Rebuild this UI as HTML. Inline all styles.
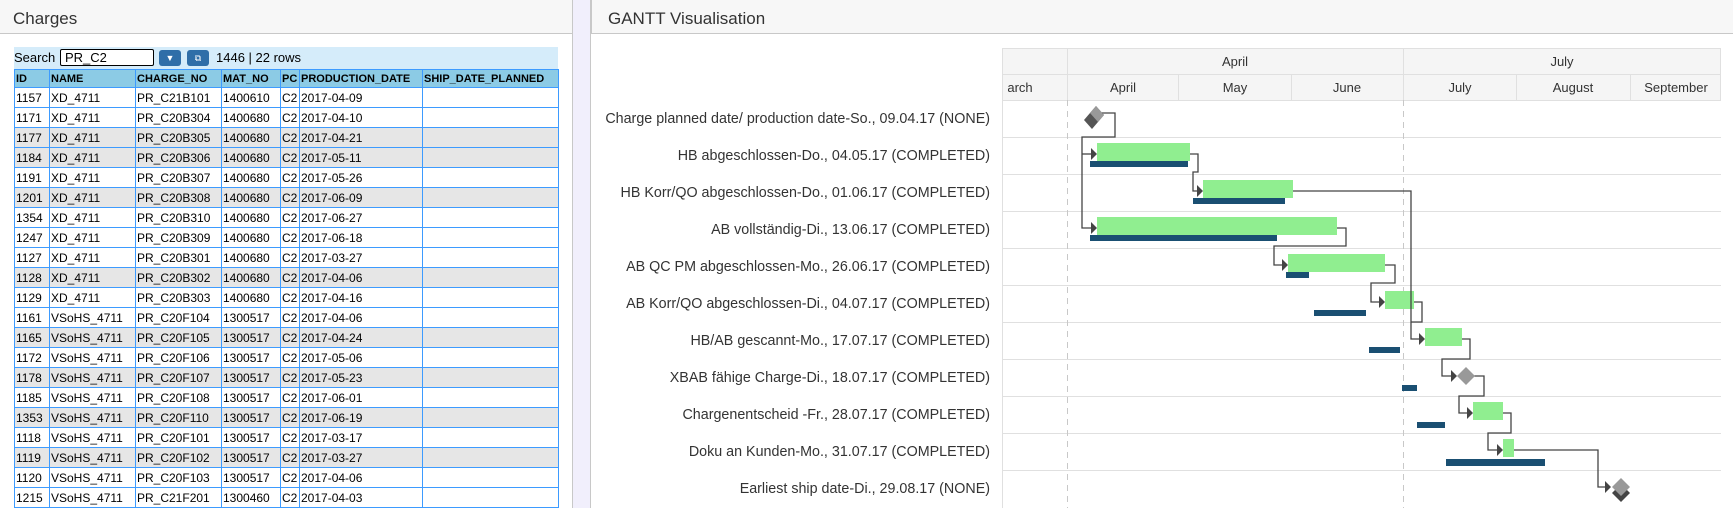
<!DOCTYPE html>
<html><head><meta charset="utf-8"><style>
*{margin:0;padding:0;box-sizing:border-box}
body{width:1733px;height:508px;overflow:hidden;background:#fff;font-family:"Liberation Sans",sans-serif;position:relative}
.ph{position:absolute;top:0;height:34px;background:#f7f7f7;border-bottom:1px solid #c8c8c8;font-size:17px;color:#333;padding:9px 0 0 0}
#lh{left:0;width:572px;padding-left:13px}
#rh{left:591px;width:1142px;padding-left:16px;border-left:1px solid #c8c8c8}
#split{position:absolute;left:572px;top:0;width:19px;height:508px;background:#f1effc;border-left:1px solid #c8c8c8;border-right:1px solid #c8c8c8}
#sb{position:absolute;left:14px;top:47px;width:544px;height:22px;background:#d5ecfa;font-size:13px;color:#000}
#sb span{position:absolute;top:3px}
#inp{position:absolute;left:46px;top:2px;width:94px;height:17px;border:1px solid #000;border-radius:2px;background:#fff;font-size:13px;padding-left:4px;line-height:15px}
.btn{position:absolute;top:3px;width:22px;height:16px;background:#2f6ea8;border-radius:3px;color:#fff;font-size:9px;text-align:center;line-height:16px}
table{position:absolute;left:14px;top:69px;border-collapse:collapse;table-layout:fixed;width:544px;font-size:12px}
td,th{border:1px solid #3d9bff;height:20px;padding:0 1px;text-align:left;white-space:nowrap;overflow:hidden}
th{background:#8ccbe5;font-size:11px;font-weight:bold;height:18px}
tr.g td{background:#e6e6e6}
</style></head><body>
<div class="ph" id="lh">Charges</div>
<div id="split"></div>
<div class="ph" id="rh">GANTT Visualisation</div>
<div id="sb"><span style="left:0">Search</span><div id="inp">PR_C2</div>
<div class="btn" style="left:145px">▼</div><div class="btn" style="left:173px">⧉</div>
<span style="left:202px">1446 | 22 rows</span></div>
<table>
<colgroup><col style="width:35px"><col style="width:86px"><col style="width:86px"><col style="width:59px"><col style="width:19px"><col style="width:123px"><col style="width:136px"></colgroup>
<tr><th>ID</th><th>NAME</th><th>CHARGE_NO</th><th>MAT_NO</th><th>PC</th><th>PRODUCTION_DATE</th><th>SHIP_DATE_PLANNED</th></tr>
<tr><td>1157</td><td>XD_4711</td><td>PR_C21B101</td><td>1400610</td><td>C2</td><td>2017-04-09</td><td></td></tr>
<tr><td>1171</td><td>XD_4711</td><td>PR_C20B304</td><td>1400680</td><td>C2</td><td>2017-04-10</td><td></td></tr>
<tr class="g"><td>1177</td><td>XD_4711</td><td>PR_C20B305</td><td>1400680</td><td>C2</td><td>2017-04-21</td><td></td></tr>
<tr class="g"><td>1184</td><td>XD_4711</td><td>PR_C20B306</td><td>1400680</td><td>C2</td><td>2017-05-11</td><td></td></tr>
<tr><td>1191</td><td>XD_4711</td><td>PR_C20B307</td><td>1400680</td><td>C2</td><td>2017-05-26</td><td></td></tr>
<tr class="g"><td>1201</td><td>XD_4711</td><td>PR_C20B308</td><td>1400680</td><td>C2</td><td>2017-06-09</td><td></td></tr>
<tr><td>1354</td><td>XD_4711</td><td>PR_C20B310</td><td>1400680</td><td>C2</td><td>2017-06-27</td><td></td></tr>
<tr><td>1247</td><td>XD_4711</td><td>PR_C20B309</td><td>1400680</td><td>C2</td><td>2017-06-18</td><td></td></tr>
<tr><td>1127</td><td>XD_4711</td><td>PR_C20B301</td><td>1400680</td><td>C2</td><td>2017-03-27</td><td></td></tr>
<tr class="g"><td>1128</td><td>XD_4711</td><td>PR_C20B302</td><td>1400680</td><td>C2</td><td>2017-04-06</td><td></td></tr>
<tr><td>1129</td><td>XD_4711</td><td>PR_C20B303</td><td>1400680</td><td>C2</td><td>2017-04-16</td><td></td></tr>
<tr><td>1161</td><td>VSoHS_4711</td><td>PR_C20F104</td><td>1300517</td><td>C2</td><td>2017-04-06</td><td></td></tr>
<tr class="g"><td>1165</td><td>VSoHS_4711</td><td>PR_C20F105</td><td>1300517</td><td>C2</td><td>2017-04-24</td><td></td></tr>
<tr><td>1172</td><td>VSoHS_4711</td><td>PR_C20F106</td><td>1300517</td><td>C2</td><td>2017-05-06</td><td></td></tr>
<tr class="g"><td>1178</td><td>VSoHS_4711</td><td>PR_C20F107</td><td>1300517</td><td>C2</td><td>2017-05-23</td><td></td></tr>
<tr><td>1185</td><td>VSoHS_4711</td><td>PR_C20F108</td><td>1300517</td><td>C2</td><td>2017-06-01</td><td></td></tr>
<tr class="g"><td>1353</td><td>VSoHS_4711</td><td>PR_C20F110</td><td>1300517</td><td>C2</td><td>2017-06-19</td><td></td></tr>
<tr><td>1118</td><td>VSoHS_4711</td><td>PR_C20F101</td><td>1300517</td><td>C2</td><td>2017-03-17</td><td></td></tr>
<tr class="g"><td>1119</td><td>VSoHS_4711</td><td>PR_C20F102</td><td>1300517</td><td>C2</td><td>2017-03-27</td><td></td></tr>
<tr><td>1120</td><td>VSoHS_4711</td><td>PR_C20F103</td><td>1300517</td><td>C2</td><td>2017-04-06</td><td></td></tr>
<tr><td>1215</td><td>VSoHS_4711</td><td>PR_C21F201</td><td>1300460</td><td>C2</td><td>2017-04-03</td><td></td></tr>
</table>
<svg width="1733" height="508" style="position:absolute;left:0;top:0" font-family="Liberation Sans, sans-serif">
<rect x="1002" y="48" width="719" height="52" fill="#f5f5f5"/>
<g stroke="#e0e0e0" stroke-width="1">
<line x1="1002" y1="48.5" x2="1721" y2="48.5"/><line x1="1002" y1="74.5" x2="1721" y2="74.5"/><line x1="1002" y1="100.5" x2="1721" y2="100.5"/>
<line x1="1002.5" y1="48" x2="1002.5" y2="508"/><line x1="1720.5" y1="48" x2="1720.5" y2="100"/>
<line x1="1067.5" y1="48" x2="1067.5" y2="100"/><line x1="1403.5" y1="48" x2="1403.5" y2="100"/>
<line x1="1178.5" y1="74" x2="1178.5" y2="100"/><line x1="1291.5" y1="74" x2="1291.5" y2="100"/>
<line x1="1516.5" y1="74" x2="1516.5" y2="100"/><line x1="1630.5" y1="74" x2="1630.5" y2="100"/>
<line x1="1002" y1="137.5" x2="1721" y2="137.5"/><line x1="1002" y1="174.5" x2="1721" y2="174.5"/>
<line x1="1002" y1="211.5" x2="1721" y2="211.5"/><line x1="1002" y1="248.5" x2="1721" y2="248.5"/>
<line x1="1002" y1="285.5" x2="1721" y2="285.5"/><line x1="1002" y1="322.5" x2="1721" y2="322.5"/>
<line x1="1002" y1="359.5" x2="1721" y2="359.5"/><line x1="1002" y1="396.5" x2="1721" y2="396.5"/>
<line x1="1002" y1="433.5" x2="1721" y2="433.5"/><line x1="1002" y1="470.5" x2="1721" y2="470.5"/>
</g>
<g stroke="#c8c8c8" stroke-dasharray="6,5"><line x1="1067.5" y1="100" x2="1067.5" y2="508"/><line x1="1403.5" y1="100" x2="1403.5" y2="508"/></g>
<g font-size="13" fill="#333" text-anchor="middle">
<text x="1235" y="66">April</text><text x="1562" y="66">July</text>
<text x="1123" y="92">April</text><text x="1235" y="92">May</text><text x="1347" y="92">June</text>
<text x="1460" y="92">July</text><text x="1573" y="92">August</text><text x="1676" y="92">September</text>
<text x="1020" y="92">arch</text>
</g>
<g font-size="14.3" fill="#333" text-anchor="end">
<text x="990" y="123">Charge planned date/ production date-So., 09.04.17 (NONE)</text>
<text x="990" y="160">HB abgeschlossen-Do., 04.05.17 (COMPLETED)</text>
<text x="990" y="197">HB Korr/QO abgeschlossen-Do., 01.06.17 (COMPLETED)</text>
<text x="990" y="234">AB vollständig-Di., 13.06.17 (COMPLETED)</text>
<text x="990" y="271">AB QC PM abgeschlossen-Mo., 26.06.17 (COMPLETED)</text>
<text x="990" y="308">AB Korr/QO abgeschlossen-Di., 04.07.17 (COMPLETED)</text>
<text x="990" y="345">HB/AB gescannt-Mo., 17.07.17 (COMPLETED)</text>
<text x="990" y="382">XBAB fähige Charge-Di., 18.07.17 (COMPLETED)</text>
<text x="990" y="419">Chargenentscheid -Fr., 28.07.17 (COMPLETED)</text>
<text x="990" y="456">Doku an Kunden-Mo., 31.07.17 (COMPLETED)</text>
<text x="990" y="493">Earliest ship date-Di., 29.08.17 (NONE)</text>
</g>
<g fill="#90ee90">
<rect x="1097" y="143" width="93" height="18"/><rect x="1203" y="180" width="90" height="18"/>
<rect x="1097" y="217" width="240" height="18"/><rect x="1288" y="254" width="97" height="18"/>
<rect x="1385" y="291" width="29" height="18"/><rect x="1425" y="328" width="37" height="18"/>
<rect x="1473" y="402" width="30" height="18"/><rect x="1503" y="439" width="11" height="18"/>
</g>
<g fill="#1a4f72">
<rect x="1090" y="161" width="98" height="6"/><rect x="1193" y="198" width="92" height="6"/>
<rect x="1090" y="235" width="187" height="6"/><rect x="1286" y="272" width="23" height="6"/>
<rect x="1314" y="310" width="52" height="6"/><rect x="1369" y="347" width="31" height="6"/>
<rect x="1402" y="385" width="15" height="6"/><rect x="1417" y="422" width="28" height="6"/>
<rect x="1446" y="459" width="99" height="7"/>
</g>
<g fill="none" stroke="#444" stroke-width="1.3">
<polyline points="1100,113 1115,113 1115,137 1082,137 1082,228 1092,228"/>
<polyline points="1082,154 1092,154"/>
<polyline points="1190,154 1198,154 1198,172 1193,172 1193,191 1198,191"/>
<polyline points="1293,191 1411,191 1411,339 1420,339"/>
<polyline points="1337,228 1346,228 1346,246 1274,246 1274,265 1283,265"/>
<polyline points="1385,265 1395,265 1395,283 1371,283 1371,302 1380,302"/>
<polyline points="1414,302 1422,302 1422,322 1411,322"/>
<polyline points="1462,339 1470,339 1470,359 1442,359 1442,376 1452,376"/>
<polyline points="1474,376 1484,376 1484,396 1459,396 1459,413 1468,413"/>
<polyline points="1503,413 1511,413 1511,433 1488,433 1488,450 1498,450"/>
<polyline points="1514,450 1598,450 1598,487 1606,487"/>
</g>
<g fill="#444">
<path d="M1091,148 L1097,154 L1091,160Z"/><path d="M1091,222 L1097,228 L1091,234Z"/>
<path d="M1197,185 L1203,191 L1197,197Z"/><path d="M1282,259 L1288,265 L1282,271Z"/>
<path d="M1379,296 L1385,302 L1379,308Z"/><path d="M1419,333 L1425,339 L1419,345Z"/>
<path d="M1451,370 L1457,376 L1451,382Z"/><path d="M1467,407 L1473,413 L1467,419Z"/>
<path d="M1497,444 L1503,450 L1497,456Z"/><path d="M1605,481 L1611,487 L1605,493Z"/>
</g>
<path d="M1096,106 L1104,115 L1092,129 L1084,120Z" fill="#555"/>
<path d="M1096,106 L1104,115 L1098,122 L1090,113Z" fill="#999"/>
<path d="M1466,367 L1475,376 L1466,385 L1457,376Z" fill="#999"/>
<path d="M1621,484 L1630,493 L1621,502 L1612,493Z" fill="#444"/>
<path d="M1621,478 L1630,487 L1621,496 L1612,487Z" fill="#999"/>
</svg>
</body></html>
